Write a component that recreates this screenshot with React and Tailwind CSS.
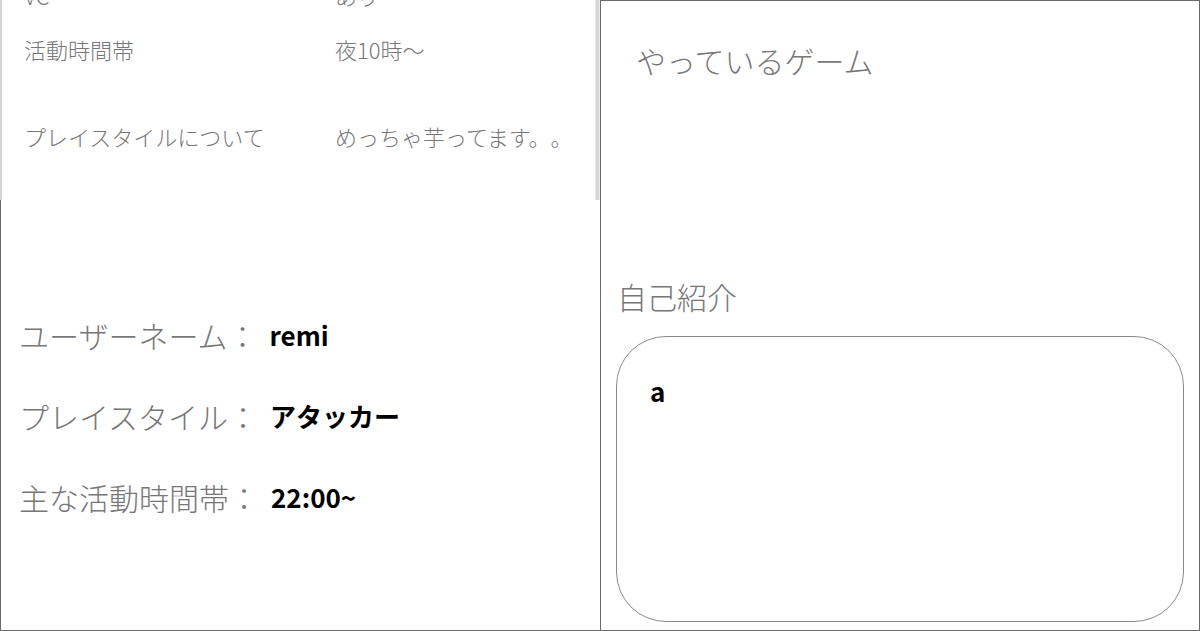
export default function App() {
  const jp = { fontFamily: '"Noto Sans CJK JP", "Noto Sans", sans-serif' }

  const topRows = [
    { label: 'VC', value: 'あり', h: 'h-[44px]' },
    { label: '活動時間帯', value: '夜10時〜', h: 'h-[64px]' },
    { label: 'プレイスタイルについて', value: 'めっちゃ芋ってます。。', h: 'h-[110px]' },
  ]

  const profile = [
    { label: 'ユーザーネーム', value: 'remi' },
    { label: 'プレイスタイル', value: 'アタッカー' },
    { label: '主な活動時間帯', value: '22:00~' },
  ]

  return (
    <div className="flex w-[1200px] h-[631px] bg-white overflow-hidden [text-spacing-trim:space-all]" style={jp}>
      {/* left column */}
      <div className="w-[600px] h-[631px] flex flex-col border-l border-b border-[#6b6b6b]">
        <div className="relative h-[200px] overflow-hidden -ml-px border-l-2 border-[#d4d4d4]">
          <div className="-mt-[27px] pl-[22px]">
            {topRows.map((row) => (
              <div key={row.label} className={`flex items-center ${row.h}`}>
                <span className="w-[311px] text-[22px] leading-none font-light text-[#777]">{row.label}</span>
                <span className="text-[22px] leading-none font-light text-[#777]">{row.value}</span>
              </div>
            ))}
          </div>
          <div className="absolute top-0 right-0 w-[5px] h-[200px] bg-[#d6d6d6] border-x border-[#ececec]" />
        </div>

        <div className="flex flex-col gap-[51px] pl-[18px] pt-[120px]">
          {profile.map((p) => (
            <div key={p.label} className="flex items-center h-[30px]">
              <span className="text-[30px] leading-none font-light text-[#777]">{p.label}：</span>
              <span className="ml-[12px] text-[26px] leading-none font-bold text-black">{p.value}</span>
            </div>
          ))}
        </div>
      </div>

      {/* right column */}
      <div className="w-[600px] h-[631px] flex flex-col border border-[#6b6b6b] pl-[15px] pr-[15px]">
        <h2 className="mt-[44px] ml-[20px] text-[30px] leading-none font-light text-[#777]">やっているゲーム</h2>
        <h2 className="mt-[206px] ml-[1px] text-[30px] leading-none font-light text-[#777]">自己紹介</h2>
        <div className="mt-[25px] h-[286px] rounded-[50px] border border-[#8a8a8a] pl-[33px] pt-[41px]">
          <p className="text-[26px] leading-none font-bold text-black">a</p>
        </div>
      </div>
    </div>
  )
}
